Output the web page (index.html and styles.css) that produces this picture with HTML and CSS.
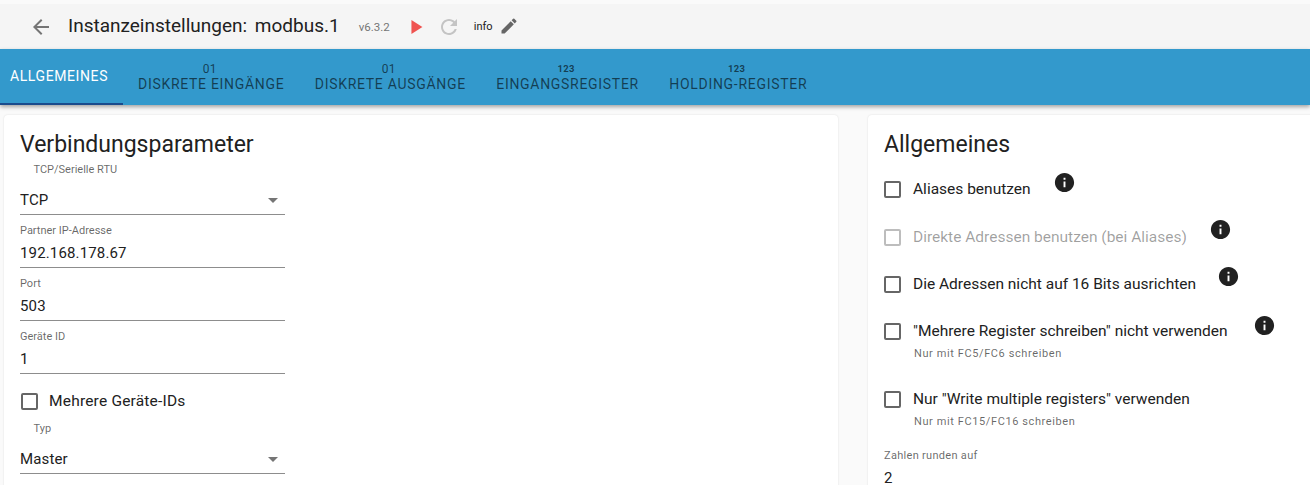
FILE: index.html
```html
<!DOCTYPE html>
<html lang="de">
<head>
<meta charset="utf-8">
<title>Instanzeinstellungen: modbus.1</title>
<link rel="stylesheet" href="styles.css">
</head>
<body>
<header class="topbar">
  <svg class="back" viewBox="0 0 24 24"><path d="M20 11H7.83l5.59-5.59L12 4l-8 8 8 8 1.41-1.41L7.83 13H20v-2z"/></svg>
  <h1 class="page-title">Instanzeinstellungen: <span class="page-name">modbus.1</span></h1>
  <span class="version">v6.3.2</span>
  <svg class="play" viewBox="0 0 24 24"><path d="M7 4.3L19 12 7 19.7z"/></svg>
  <svg class="reload" viewBox="0 0 24 24"><path d="M17.65 6.35C16.2 4.9 14.21 4 12 4c-4.42 0-7.99 3.58-7.99 8s3.57 8 7.99 8c3.73 0 6.84-2.55 7.73-6h-2.08c-.82 2.33-3.04 4-5.65 4-3.31 0-6-2.69-6-6s2.69-6 6-6c1.66 0 3.14.69 4.22 1.78L13 11h7V4l-2.35 2.35z"/></svg>
  <span class="loglevel">info</span>
  <svg class="edit" viewBox="0 0 24 24"><path d="M3 17.25V21h3.75L17.81 9.94l-3.75-3.75L3 17.25zM20.71 7.04a1 1 0 0 0 0-1.41l-2.34-2.34a1 1 0 0 0-1.41 0l-1.83 1.83 3.75 3.75 1.83-1.83z"/></svg>
</header>
<nav class="tabs">
  <div class="tab tab-active"><span class="tab-label">Allgemeines</span></div>
  <div class="tab"><span class="tab-icon">01</span><span class="tab-label">Diskrete Eingänge</span></div>
  <div class="tab"><span class="tab-icon">01</span><span class="tab-label">Diskrete Ausgänge</span></div>
  <div class="tab"><span class="tab-icon tab-icon-bold">123</span><span class="tab-label">Eingangsregister</span></div>
  <div class="tab"><span class="tab-icon tab-icon-bold">123</span><span class="tab-label">Holding-Register</span></div>
</nav>
<main class="content">
  <section class="card card-left">
    <h2 class="card-title">Verbindungsparameter</h2>
    <div class="select-field">
      <label class="select-label">TCP/Serielle RTU</label>
      <div class="value select-value">TCP<span class="caret"></span></div>
    </div>
    <div class="field">
      <label class="field-label">Partner IP-Adresse</label>
      <div class="value">192.168.178.67</div>
    </div>
    <div class="field">
      <label class="field-label">Port</label>
      <div class="value">503</div>
    </div>
    <div class="field">
      <label class="field-label">Geräte ID</label>
      <div class="value">1</div>
    </div>
    <div class="check-row check-left"><span class="box"></span><span class="check-text">Mehrere Geräte-IDs</span></div>
    <div class="select-field select-typ">
      <label class="select-label">Typ</label>
      <div class="value select-value">Master<span class="caret"></span></div>
    </div>
  </section>
  <section class="card card-right">
    <h2 class="card-title">Allgemeines</h2>
    <div class="opt-1">
      <div class="check-row"><span class="box"></span><span class="check-text">Aliases benutzen</span>
        <svg class="info info-1" viewBox="0 0 24 24"><use href="#i"/></svg></div>
    </div>
    <div class="opt-2">
      <div class="check-row disabled"><span class="box"></span><span class="check-text">Direkte Adressen benutzen (bei Aliases)</span>
        <svg class="info info-2" viewBox="0 0 24 24"><use href="#i"/></svg></div>
    </div>
    <div class="opt-3">
      <div class="check-row"><span class="box"></span><span class="check-text">Die Adressen nicht auf 16 Bits ausrichten</span>
        <svg class="info info-3" viewBox="0 0 24 24"><use href="#i"/></svg></div>
    </div>
    <div class="opt-3">
      <div class="check-row"><span class="box"></span><span class="check-text">"Mehrere Register schreiben" nicht verwenden</span>
        <svg class="info info-4" viewBox="0 0 24 24"><use href="#i"/></svg></div>
      <p class="help">Nur mit FC5/FC6 schreiben</p>
    </div>
    <div class="opt-5">
      <div class="check-row"><span class="box"></span><span class="check-text">Nur "Write multiple registers" verwenden</span></div>
      <p class="help">Nur mit FC15/FC16 schreiben</p>
    </div>
    <div class="field field-round">
      <label class="field-label">Zahlen runden auf</label>
      <div class="value">2</div>
    </div>
  </section>
</main>
<svg class="defs" width="0" height="0"><defs><path id="i" d="M12 2C6.48 2 2 6.48 2 12s4.48 10 10 10 10-4.48 10-10S17.52 2 12 2zm1 15h-2v-6h2v6zm0-8h-2V7h2v2z"/></defs></svg>
</body>
</html>
```
FILE: styles.css
```css
* { box-sizing: border-box; }
html, body { margin: 0; padding: 0; height: 485px; overflow: hidden; }
body { font-family: Roboto, "Liberation Sans", sans-serif; color: rgba(0,0,0,.87); background: #fafafa; }

.topbar { height: 49px; background: #f5f5f5; border-top: 4px solid #fafafa; display: flex; align-items: center; padding-left: 29px; }
.back { width: 24px; height: 24px; fill: #757575; flex: none; }
.page-title { margin: 0 0 1px 15px; font-size: 19px; font-weight: 400; line-height: 24px; color: #212121; white-space: nowrap; word-spacing: 1px; }
.page-name { margin-left: 2px; }
.version { margin-left: 19px; font-size: 11.5px; color: #757575; }
.play { width: 22px; height: 22px; margin-left: 15px; fill: #ef5350; flex: none; }
.reload { width: 24px; height: 24px; margin-left: 10px; fill: #c4c4c4; flex: none; }
.loglevel { margin-left: 13px; font-size: 11px; color: #212121; }
.edit { width: 20px; height: 20px; margin: 0 0 2px 6.5px; fill: #666; flex: none; }

.tabs { height: 56px; background: #3399cc; display: flex; box-shadow: 0 2px 4px rgba(0,0,0,.35); position: relative; }
.tab { display: flex; flex-direction: column; align-items: center; justify-content: flex-end; padding: 0 15.4px 13px 15px; color: rgba(0,0,0,.6); }
.tab-active { width: 123px; padding: 0 5px 19px 0; color: #fff; border-bottom: 2px solid #1a4b8c; }
.tab-label { font-size: 14px; line-height: 16px; text-transform: uppercase; letter-spacing: .7px; white-space: nowrap; }
.tab-active .tab-label { letter-spacing: .6px; }
.tab-icon { font-size: 12px; line-height: 10px; margin: 0 3px 2px 0; letter-spacing: .3px; }
.tab-icon-bold { font-size: 9.5px; font-weight: 700; }

.content { display: flex; gap: 30px; padding: 10px 0 0 4px; height: 380px; overflow: hidden; }
.card { background: #fff; border-radius: 4px; box-shadow: 0 0 2px rgba(0,0,0,.12); height: 400px; padding: 16px; flex: none; }
.card-left { width: 834px; }
.card-right { width: 460px; }
.card-title { margin: 0; font-size: 23px; font-weight: 400; line-height: 27px; color: #212121; }

.field { width: 265px; height: 53px; padding-top: 9px; }
.field-label { display: block; font-size: 11px; line-height: 14px; color: rgba(0,0,0,.6); }
.value { height: 30px; padding-top: 6px; font-size: 15px; letter-spacing: .15px; line-height: 19px; color: #212121; border-bottom: 1px solid #8d8d8d; }

.select-field { width: 265px; margin-top: 5px; }
.select-label { display: block; padding-left: 13.5px; font-size: 11px; line-height: 14px; color: rgba(0,0,0,.6); }
.select-value { position: relative; height: 38px; padding-top: 14px; }
.caret { position: absolute; right: 7px; top: 21px; border: 5px solid transparent; border-top-color: #757575; border-bottom: 0; }
.select-typ { margin-top: 11px; }

.check-row { display: flex; align-items: center; height: 20px; }
.box { width: 17px; height: 17px; border: 2px solid #666; border-radius: 2px; flex: none; }
.check-text { margin-left: 12px; font-size: 15.5px; line-height: 20px; color: #212121; white-space: nowrap; }
.check-left { margin-top: 17px; }
.check-left .box { margin-left: 1px; }
.check-left .check-text { margin-left: 11px; letter-spacing: .2px; }
.disabled .box { border-color: #bdbdbd; }
.disabled .check-text { color: rgba(0,0,0,.38); }
.info { width: 23px; height: 23px; fill: #212121; flex: none; }
.info-1 { margin: 0 0 14px 22px; }
.info-2 { margin: 0 0 16px 22.5px; }
.info-3 { margin: 0 0 16px 20.5px; }
.info-4 { margin: 0 0 12px 25.5px; }

.opt-1 { margin-top: 21px; }
.opt-2 { margin-top: 28px; }
.opt-3 { margin-top: 27px; }
.opt-5 { margin-top: 29px; }
.help { margin: 7px 0 0 30px; font-size: 11px; line-height: 12px; letter-spacing: .6px; color: rgba(0,0,0,.6); white-space: nowrap; }
.field-round { margin-top: 12px; }
.field-round .field-label { letter-spacing: .3px; }
.field-round .value { border-bottom: 0; padding-top: 6px; }

.defs { position: absolute; }
```
